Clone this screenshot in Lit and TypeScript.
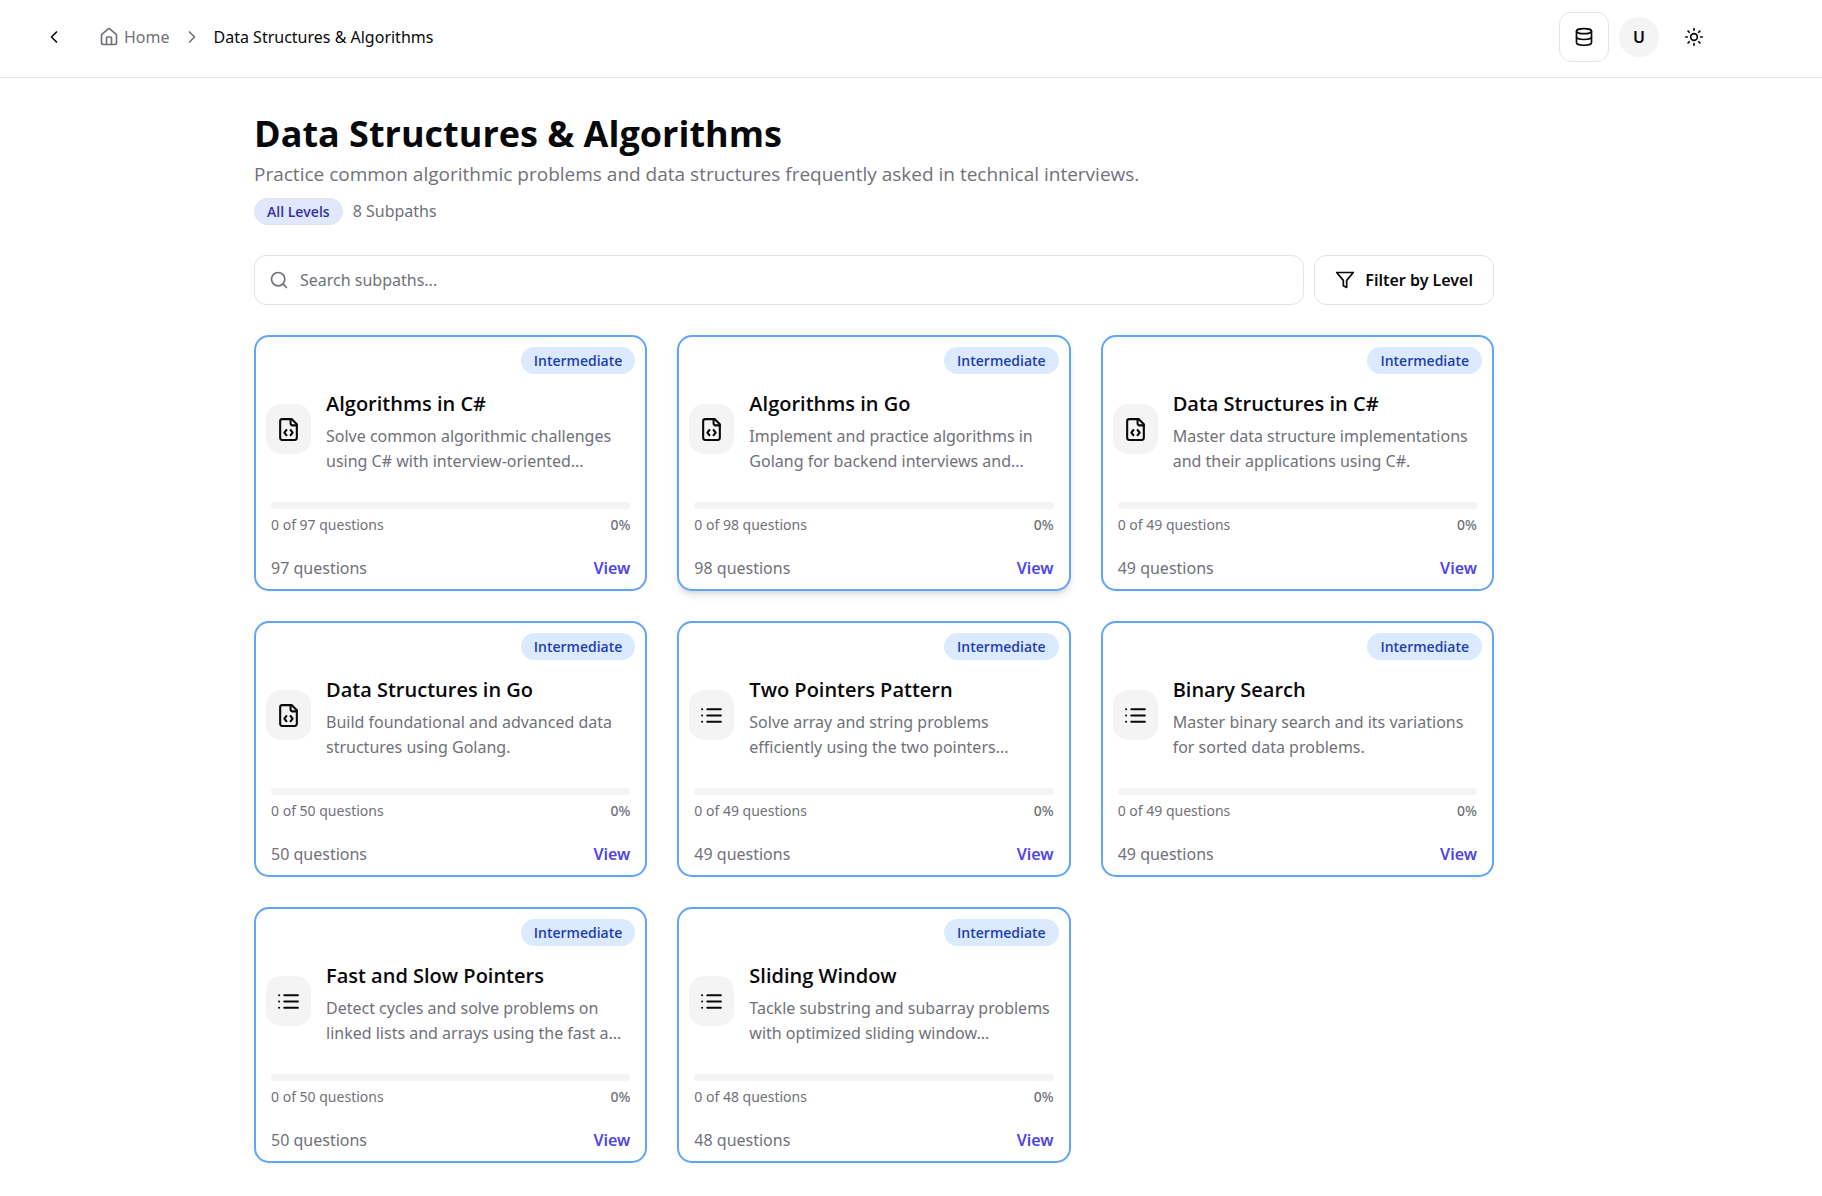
import { LitElement, html, css, svg, TemplateResult } from "lit";
import { customElement, property, state } from "lit/decorators.js";
import { classMap } from "lit/directives/class-map.js";

type IconName =
  | "back" | "home" | "chevron" | "database" | "sun"
  | "search" | "filter" | "code" | "list";

interface Subpath {
  title: string;
  blurb: string;
  icon: IconName;
  total: number;
  done: number;
  active?: boolean;
}

const SUBPATHS: Subpath[] = [
  { title: "Algorithms in C#", blurb: "Solve common algorithmic challenges\nusing C# with interview-oriented...", icon: "code", total: 97, done: 0 },
  { title: "Algorithms in Go", blurb: "Implement and practice algorithms in\nGolang for backend interviews and...", icon: "code", total: 98, done: 0, active: true },
  { title: "Data Structures in C#", blurb: "Master data structure implementations\nand their applications using C#.", icon: "code", total: 49, done: 0 },
  { title: "Data Structures in Go", blurb: "Build foundational and advanced data\nstructures using Golang.", icon: "code", total: 50, done: 0 },
  { title: "Two Pointers Pattern", blurb: "Solve array and string problems\nefficiently using the two pointers...", icon: "list", total: 49, done: 0 },
  { title: "Binary Search", blurb: "Master binary search and its variations\nfor sorted data problems.", icon: "list", total: 49, done: 0 },
  { title: "Fast and Slow Pointers", blurb: "Detect cycles and solve problems on\nlinked lists and arrays using the fast a...", icon: "list", total: 50, done: 0 },
  { title: "Sliding Window", blurb: "Tackle substring and subarray problems\nwith optimized sliding window...", icon: "list", total: 48, done: 0 },
];

const SHAPES: Record<IconName, TemplateResult> = {
  back: svg`<path d="m15 18-6-6 6-6"/>`,
  chevron: svg`<path d="m9 18 6-6-6-6"/>`,
  home: svg`<path d="M15 21v-8a1 1 0 0 0-1-1h-4a1 1 0 0 0-1 1v8"/><path d="M3 10a2 2 0 0 1 .709-1.528l7-5.999a2 2 0 0 1 2.582 0l7 5.999A2 2 0 0 1 21 10v9a2 2 0 0 1-2 2H5a2 2 0 0 1-2-2z"/>`,
  database: svg`<ellipse cx="12" cy="5" rx="9" ry="3"/><path d="M3 5v14a9 3 0 0 0 18 0V5"/><path d="M3 12a9 3 0 0 0 18 0"/>`,
  sun: svg`<circle cx="12" cy="12" r="4"/><path d="M12 2v2M12 20v2M4.93 4.93l1.41 1.41M17.66 17.66l1.41 1.41M2 12h2M20 12h2M6.34 17.66l-1.41 1.41M19.07 4.93l-1.41 1.41"/>`,
  search: svg`<circle cx="11" cy="11" r="8"/><path d="m21 21-4.3-4.3"/>`,
  filter: svg`<polygon points="22 3 2 3 10 12.46 10 19 14 21 14 12.46 22 3"/>`,
  code: svg`<path d="M10 12.5 8 15l2 2.5"/><path d="m14 12.5 2 2.5-2 2.5"/><path d="M14 2v4a2 2 0 0 0 2 2h4"/><path d="M15 2H6a2 2 0 0 0-2 2v16a2 2 0 0 0 2 2h12a2 2 0 0 0 2-2V7z"/>`,
  list: svg`<path d="M3 12h.01M3 18h.01M3 6h.01M8 12h13M8 18h13M8 6h13"/>`,
};

const icon = (name: IconName, size = 20) => html`<svg
  width=${size} height=${size} viewBox="0 0 24 24" fill="none" stroke="currentColor"
  stroke-width="2" stroke-linecap="round" stroke-linejoin="round" aria-hidden="true"
>${SHAPES[name]}</svg>`;

@customElement("subpath-card")
export class SubpathCard extends LitElement {
  @property({ attribute: false }) item!: Subpath;

  static styles = css`
    :host { display: block; }
    .card {
      box-sizing: border-box;
      height: 100%;
      display: flex;
      flex-direction: column;
      border: 2px solid #60a5fa;
      border-radius: 15px;
      background: #fff;
      padding: 10px 10px 8px;
      box-shadow: 0 1px 2px rgba(0, 0, 0, 0.05);
    }
    .card:hover, .active { box-shadow: 0 5px 8px -1px rgba(0, 0, 0, 0.1), 0 3px 5px -2px rgba(0, 0, 0, 0.1); }
    .level {
      align-self: flex-end;
      padding: 0 13px;
      border-radius: 14px;
      background: #dbeafe;
      color: #1e40af;
      font-family: "Open Sans", sans-serif;
      font-size: 14px;
      line-height: 27px;
      font-weight: 600;
    }
    .intro { display: flex; align-items: center; gap: 15px; margin-top: 10px; }
    .tile {
      flex: none;
      width: 45px;
      height: 50px;
      display: grid;
      place-items: center;
      border-radius: 15px;
      background: #f4f4f5;
    }
    .words { min-width: 0; flex: 1; }
    h2 { margin: 0; font-family: "Open Sans", sans-serif; font-size: 20px; line-height: 40px; font-weight: 600; white-space: nowrap; }
    p { margin: 0; font-size: 16px; line-height: 25px; color: #71717a; white-space: pre; }
    .stats { padding: 0 5px; margin-top: 28px; }
    .track { height: 7px; border-radius: 4px; background: #f4f4f5; overflow: hidden; }
    .fill { height: 100%; background: #4f46e5; }
    .row { display: flex; justify-content: space-between; color: #71717a; }
    .small { margin-top: 5px; font-size: 14px; line-height: 21px; }
    .foot { margin-top: 21px; font-size: 16px; line-height: 25px; }
    .percent { font-weight: 500; }
    a { color: #4f46e5; font-weight: 600; text-decoration: none; }
  `;

  render() {
    const { title, blurb, total, done, active } = this.item;
    const percent = Math.round((done / total) * 100);
    return html`
      <article class=${classMap({ card: true, active: !!active })}>
        <span class="level">Intermediate</span>
        <div class="intro">
          <div class="tile">${icon(this.item.icon, 25)}</div>
          <div class="words"><h2>${title}</h2><p>${blurb}</p></div>
        </div>
        <div class="stats">
          <div class="track"><div class="fill" style="width:${percent}%"></div></div>
          <div class="row small"><span>${done} of ${total} questions</span><span class="percent">${percent}%</span></div>
          <div class="row foot"><span>${total} questions</span><a href="#">View</a></div>
        </div>
      </article>`;
  }
}

@customElement("app-root")
export class AppRoot extends LitElement {
  @state() private query = "";

  static styles = css`
    :host {
      display: block;
      min-height: 100vh;
      background: #fff;
      color: #09090b;
      font-family: "Segoe UI", "Noto Sans", "Open Sans", sans-serif;
      font-size: 16px;
      line-height: 25px;
    }
    * { box-sizing: border-box; }
    svg { display: block; flex: none; }
    button { font: inherit; color: inherit; cursor: pointer; }
    header {
      display: flex;
      align-items: center;
      justify-content: space-between;
      padding: 12px 103px 15px 29px;
      border-bottom: 1px solid #e4e4e7;
    }
    nav, .tools, .crumb, .meta, .controls { display: flex; align-items: center; }
    nav { gap: 20px; }
    ol { display: flex; align-items: center; gap: 12px; margin: 0; padding: 0; list-style: none; }
    .crumb { gap: 5px; color: #71717a; text-decoration: none; }
    .sep { color: #71717a; }
    .tools { gap: 10px; }
    .square {
      width: 50px;
      height: 50px;
      padding: 0;
      display: grid;
      place-items: center;
      border: 1px solid transparent;
      border-radius: 12px;
      background: transparent;
    }
    .outlined { border-color: #e4e4e7; background: #fff; }
    .avatar {
      width: 40px;
      height: 40px;
      padding: 0;
      border: 0;
      border-radius: 50%;
      background: #f4f4f5;
      font-weight: 600;
    }
    main { padding: 30px 74px 30px 0; }
    .inner { max-width: 1240px; margin: 0 auto; }
    h1, .lead, .badge { font-family: "Open Sans", sans-serif; }
    h1 { margin: 0; font-size: 36px; line-height: 51px; font-weight: 700; }
    .lead { margin: 0; font-size: 19px; line-height: 31px; color: #71717a; }
    .meta { gap: 10px; margin-top: 8px; color: #71717a; }
    .badge {
      padding: 0 12px;
      border: 1px solid #e4e4e7;
      border-radius: 14px;
      background: #e0e7ff;
      color: #3730a3;
      font-size: 14px;
      line-height: 25px;
      font-weight: 600;
    }
    .controls { gap: 10px; margin-top: 30px; }
    .search {
      flex: 1;
      height: 50px;
      display: flex;
      align-items: center;
      gap: 11px;
      padding: 0 14px;
      border: 1px solid #e4e4e7;
      border-radius: 12px;
      color: #71717a;
    }
    input {
      flex: 1;
      min-width: 0;
      padding: 0;
      border: 0;
      outline: 0;
      background: transparent;
      font: inherit;
      color: #09090b;
    }
    input::placeholder { color: #71717a; opacity: 1; }
    .filter {
      height: 50px;
      display: flex;
      align-items: center;
      gap: 10px;
      padding: 0 20px;
      border: 1px solid #e4e4e7;
      border-radius: 12px;
      background: #fff;
      font-weight: 600;
    }
    .grid { display: grid; grid-template-columns: repeat(3, minmax(0, 1fr)); gap: 30px; margin-top: 30px; }
  `;

  render() {
    const q = this.query.toLowerCase();
    const shown = SUBPATHS.filter((s) => s.title.toLowerCase().includes(q));
    return html`
      <header>
        <nav aria-label="Breadcrumb">
          <button class="square" aria-label="Back">${icon("back")}</button>
          <ol>
            <li><a class="crumb" href="#">${icon("home")}Home</a></li>
            <li class="sep">${icon("chevron")}</li>
            <li>Data Structures &amp; Algorithms</li>
          </ol>
        </nav>
        <div class="tools">
          <button class="square outlined" aria-label="Storage">${icon("database")}</button>
          <button class="avatar">U</button>
          <button class="square" aria-label="Toggle theme">${icon("sun")}</button>
        </div>
      </header>
      <main>
        <div class="inner">
          <h1>Data Structures &amp; Algorithms</h1>
          <p class="lead">Practice common algorithmic problems and data structures frequently asked in technical interviews.</p>
          <div class="meta"><span class="badge">All Levels</span><span>${SUBPATHS.length} Subpaths</span></div>
          <div class="controls">
            <label class="search">
              ${icon("search")}
              <input
                type="text" aria-label="Search subpaths" placeholder="Search subpaths..."
                .value=${this.query}
                @input=${(e: Event) => (this.query = (e.target as HTMLInputElement).value)}
              />
            </label>
            <button class="filter">${icon("filter")}Filter by Level</button>
          </div>
          <div class="grid">${shown.map((s) => html`<subpath-card .item=${s}></subpath-card>`)}</div>
        </div>
      </main>`;
  }
}
